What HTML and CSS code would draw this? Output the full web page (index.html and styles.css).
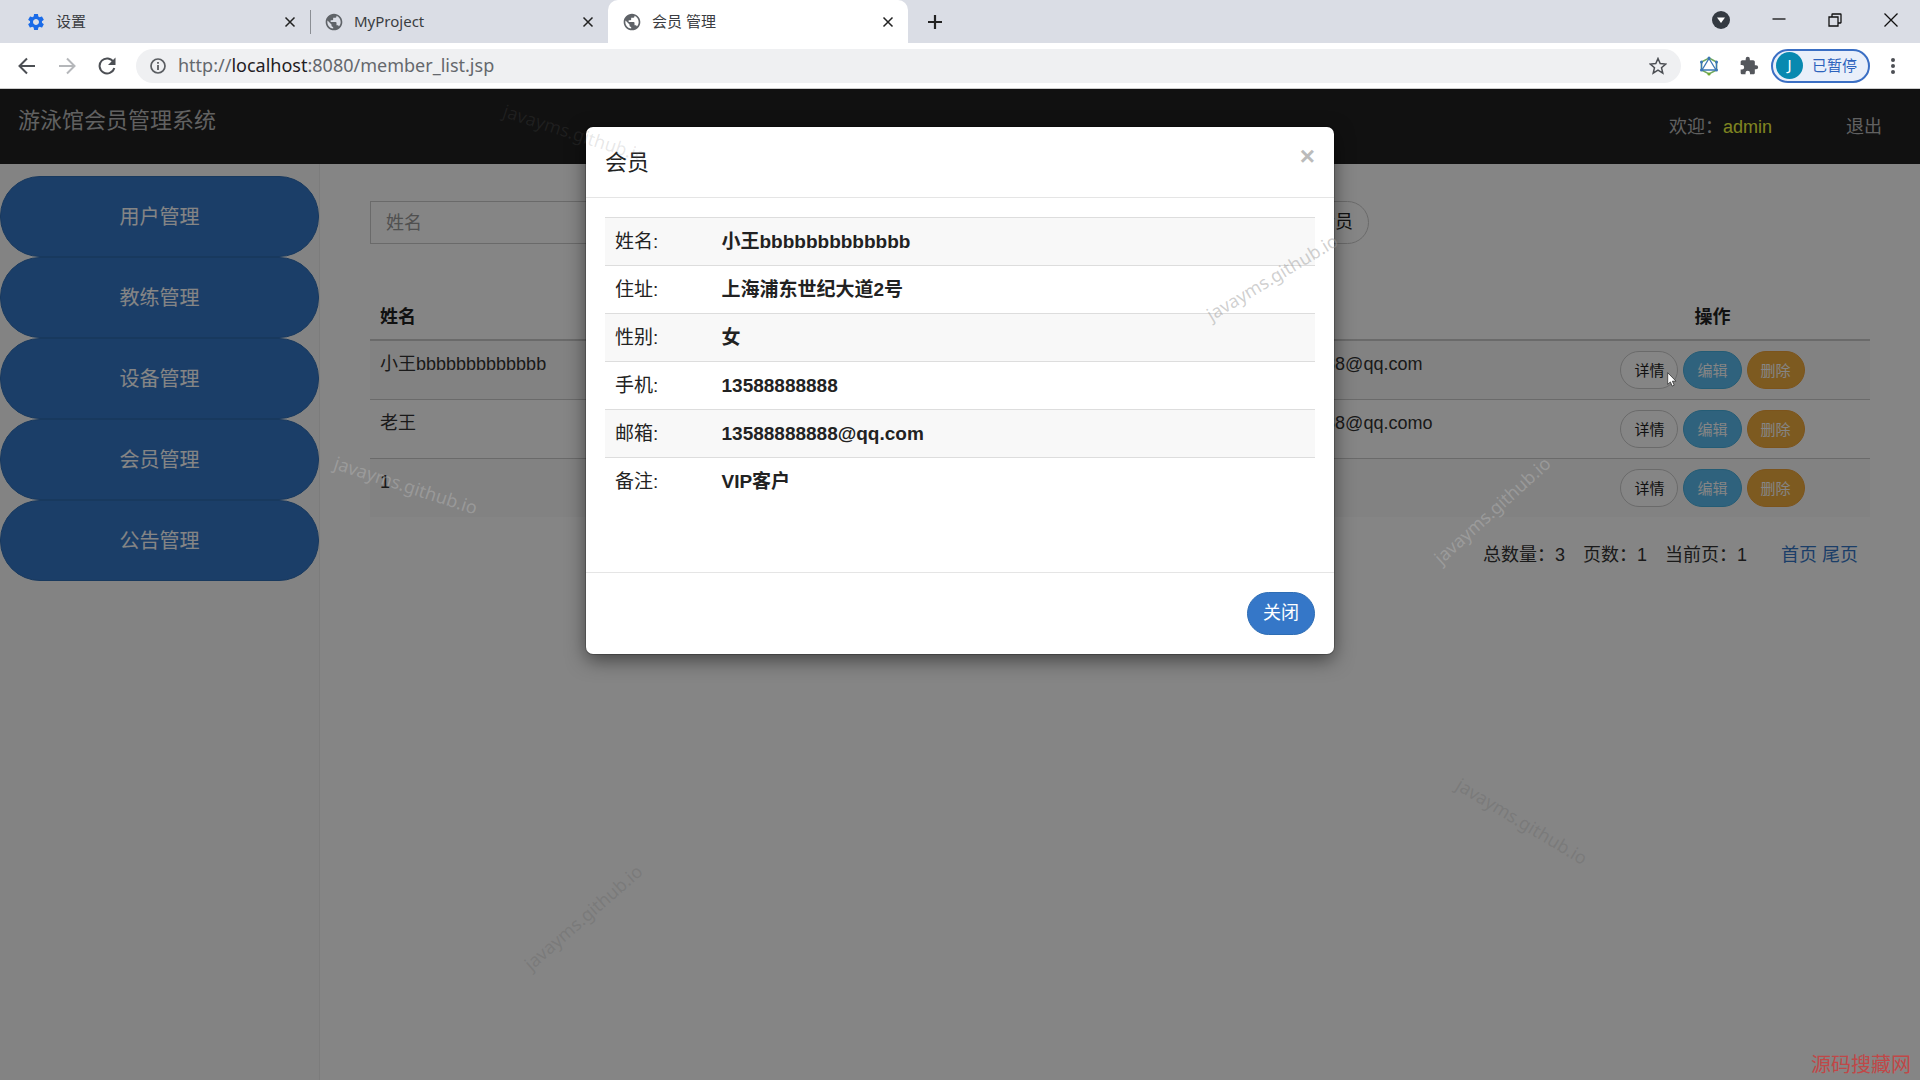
FILE: index.html
```html
<!DOCTYPE html>
<html lang="zh-CN">
<head>
<meta charset="utf-8">
<title>会员 管理</title>
<link rel="stylesheet" href="styles.css">
</head>
<body>
<svg class="defs" aria-hidden="true">
  <symbol id="x" viewBox="0 0 12 12"><path d="M1.500 1.500l9 9M10.500 1.500l-9 9" fill="none" stroke="currentColor" stroke-width="1.500"/></symbol>
  <symbol id="globe" viewBox="0 0 24 24"><path fill="currentColor" d="M12 2C6.480 2 2 6.480 2 12s4.480 10 10 10 10-4.480 10-10S17.520 2 12 2zm-1 17.930c-3.950-.490-7-3.850-7-7.930 0-.620.080-1.210.210-1.790L9 15v1c0 1.100.900 2 2 2v1.930zm6.900-2.540c-.260-.810-1-1.390-1.900-1.390h-1v-3c0-.550-.450-1-1-1H8v-2h2c.550 0 1-.450 1-1V7h2c1.100 0 2-.900 2-2v-.410c2.930 1.190 5 4.060 5 7.410 0 2.080-.800 3.970-2.100 5.390z"/></symbol>
</svg>

<header class="browser">
  <div class="tabstrip">
    <div class="tab">
      <svg class="fav fav-gear" viewBox="0 0 24 24"><path fill="currentColor" d="M19.140 12.940c.040-.300.060-.610.060-.940 0-.320-.020-.640-.070-.940l2.030-1.580c.180-.140.230-.410.120-.610l-1.920-3.320c-.120-.220-.370-.290-.590-.220l-2.390.960c-.500-.380-1.030-.700-1.620-.940L14.400 2.810c-.040-.240-.240-.410-.480-.410h-3.840c-.240 0-.430.170-.470.410L9.250 5.350c-.590.240-1.130.570-1.620.940l-2.390-.960c-.220-.080-.470 0-.590.220L2.740 8.870c-.120.210-.080.470.120.610l2.030 1.580c-.050.300-.090.630-.090.940s.020.640.070.940l-2.030 1.580c-.180.140-.230.410-.120.610l1.920 3.320c.120.220.370.290.590.220l2.390-.960c.500.380 1.030.700 1.620.940l.360 2.540c.050.240.240.410.480.410h3.840c.240 0 .440-.170.470-.410l.360-2.540c.590-.240 1.130-.560 1.620-.940l2.390.960c.220.080.470 0 .590-.220l1.920-3.320c.120-.220.070-.470-.120-.610l-2.010-1.580zM12 15.600c-1.980 0-3.600-1.620-3.600-3.600s1.620-3.600 3.600-3.600 3.600 1.620 3.600 3.600-1.620 3.600-3.600 3.600z"/></svg>
      <span class="tab-title">设置</span>
      <button class="icon-btn" aria-label="关闭标签页"><svg class="i12"><use href="#x"/></svg></button>
    </div>
    <div class="tab tab-sep">
      <svg class="fav"><use href="#globe"/></svg>
      <span class="tab-title">MyProject</span>
      <button class="icon-btn" aria-label="关闭标签页"><svg class="i12"><use href="#x"/></svg></button>
    </div>
    <div class="tab tab-active">
      <svg class="fav"><use href="#globe"/></svg>
      <span class="tab-title">会员 管理</span>
      <button class="icon-btn" aria-label="关闭标签页"><svg class="i12"><use href="#x"/></svg></button>
    </div>
    <button class="icon-btn new-tab" aria-label="新建标签页"><svg class="i16" viewBox="0 0 16 16"><path d="M8 1v14M1 8h14" stroke="currentColor" stroke-width="2.200"/></svg></button>
    <div class="window-controls">
      <button class="icon-btn" aria-label="搜索标签页"><svg class="i18" viewBox="0 0 18 18"><circle cx="9" cy="9" r="9" fill="#343a42"/><path d="M5 6.500h8L9 12z" fill="#fff"/></svg></button>
      <button class="icon-btn" aria-label="最小化"><svg class="i14" viewBox="0 0 14 14"><path d="M.500 6h13" stroke="#111" stroke-width="1.300"/></svg></button>
      <button class="icon-btn" aria-label="还原"><svg class="i14" viewBox="0 0 14 14"><path d="M1 4h9v9H1zM4 4V1.500Q4 1 4.500 1H12.500Q13 1 13 1.500V9.500Q13 10 12.500 10H10" fill="none" stroke="#111" stroke-width="1.300"/></svg></button>
      <button class="icon-btn" aria-label="关闭"><svg class="i14" viewBox="0 0 14 14"><path d="M.500.500l13 13M13.500.500l-13 13" stroke="#111" stroke-width="1.300"/></svg></button>
    </div>
  </div>
  <div class="toolbar">
    <div class="nav-buttons">
      <button class="icon-btn" aria-label="后退"><svg class="i18" viewBox="0 0 18 18"><path d="M17 9H2M9 1.500L1.500 9 9 16.500" fill="none" stroke="#4c4f54" stroke-width="2"/></svg></button>
      <button class="icon-btn" aria-label="前进"><svg class="i18" viewBox="0 0 18 18"><path d="M1 9h15M9 1.500L16.500 9 9 16.500" fill="none" stroke="#b5b7ba" stroke-width="2"/></svg></button>
      <button class="icon-btn" aria-label="刷新"><svg class="i18" viewBox="0 0 18 18"><path d="M15.500 5A7.500 7.500 0 1 0 16.300 11" fill="none" stroke="#4c4f54" stroke-width="2"/><path d="M17.500.500v7.500H10z" fill="#4c4f54"/></svg></button>
    </div>
    <div class="address">
      <svg class="i16" viewBox="0 0 16 16"><circle cx="8" cy="8" r="7" fill="none" stroke="#5a5d61" stroke-width="1.700"/><path d="M8 7v5M8 4v1.800" stroke="#5a5d61" stroke-width="1.800"/></svg>
      <span class="url">http://<span class="host">localhost</span>:8080/member_list.jsp</span>
      <button class="icon-btn" aria-label="收藏"><svg class="i18" viewBox="0 0 18 18"><path d="M9 1.500l2.200 5.100 5.500.500-4.200 3.600 1.300 5.400L9 13.200l-4.800 2.900 1.300-5.400L1.300 7.100l5.500-.500z" fill="none" stroke="#4c4f54" stroke-width="1.500"/></svg></button>
    </div>
    <button class="icon-btn" aria-label="GraphQL"><svg class="i20" viewBox="0 0 20 20"><path d="M10 2l7.500 4v8L10 18l-7.500-4V6z" fill="none" stroke="#6fa860" stroke-width="1.500"/><path d="M10 2.500L17 14H3zM2.500 6v8M17.500 6v8" fill="none" stroke="#3b77b5" stroke-width="1.300"/><g fill="#3b77b5"><circle cx="10" cy="2" r="1.500"/><circle cx="17.500" cy="6" r="1.500"/><circle cx="2.500" cy="6" r="1.500"/><circle cx="17.500" cy="14" r="1.500"/><circle cx="2.500" cy="14" r="1.500"/></g><circle cx="10" cy="18" r="1.600" fill="#6fa82f"/></svg></button>
    <button class="icon-btn" aria-label="扩展程序"><svg class="i20" viewBox="0 0 24 24"><path fill="#54575c" d="M20.500 11H19V7c0-1.100-.900-2-2-2h-4V3.500a2.500 2.500 0 0 0-5 0V5H4c-1.100 0-2 .900-2 2v3.800h1.500a2.700 2.700 0 0 1 0 5.400H2V20c0 1.100.900 2 2 2h3.800v-1.500a2.700 2.700 0 0 1 5.400 0V22H17c1.100 0 2-.900 2-2v-4h1.500a2.500 2.500 0 0 0 0-5z"/></svg></button>
    <button class="profile"><span class="avatar">J</span>已暂停</button>
    <button class="icon-btn" aria-label="菜单"><svg class="i18" viewBox="0 0 18 18"><g fill="#4c4f54"><circle cx="9" cy="3" r="2"/><circle cx="9" cy="9" r="2"/><circle cx="9" cy="15" r="2"/></g></svg></button>
  </div>
</header>

<div class="page">
  <nav class="navbar">
    <a class="brand" href="#">游泳馆会员管理系统</a>
    <span class="welcome">欢迎：<span class="user">admin</span></span>
    <a class="logout" href="#">退出</a>
  </nav>
  <div class="layout">
    <aside class="sidebar">
      <a class="side-link" href="#">用户管理</a>
      <a class="side-link" href="#">教练管理</a>
      <a class="side-link" href="#">设备管理</a>
      <a class="side-link" href="#">会员管理</a>
      <a class="side-link" href="#">公告管理</a>
    </aside>
    <main class="main">
      <form class="search">
        <input class="search-input" type="text" placeholder="姓名" aria-label="姓名">
        <button class="btn" type="button">查询</button>
        <button class="btn" type="button">添加会员</button>
      </form>
      <table class="members">
        <thead>
          <tr><th class="c-name">姓名</th><th></th><th class="c-mail">邮箱</th><th class="c-ops">操作</th></tr>
        </thead>
        <tbody>
          <tr><td>小王bbbbbbbbbbbbb</td><td></td><td>13588888888@qq.com</td><td class="ops"><div class="ops-row"><button class="btn btn-sm">详情</button><button class="btn btn-sm btn-info">编辑</button><button class="btn btn-sm btn-warning">删除</button></div></td></tr>
          <tr><td>老王</td><td></td><td>13588888888@qq.como</td><td class="ops"><div class="ops-row"><button class="btn btn-sm">详情</button><button class="btn btn-sm btn-info">编辑</button><button class="btn btn-sm btn-warning">删除</button></div></td></tr>
          <tr><td>1</td><td></td><td></td><td class="ops"><div class="ops-row"><button class="btn btn-sm">详情</button><button class="btn btn-sm btn-info">编辑</button><button class="btn btn-sm btn-warning">删除</button></div></td></tr>
        </tbody>
      </table>
      <div class="pager">
        <span>总数量：3</span><span>页数：1</span><span>当前页：1</span>
        <span class="pager-links"><a href="#">首页</a> <a href="#">尾页</a></span>
      </div>
    </main>
  </div>

  <div class="backdrop">
    <section class="modal" role="dialog" aria-labelledby="modal-title">
      <div class="modal-header">
        <h4 class="modal-title" id="modal-title">会员</h4>
        <button class="modal-close" aria-label="关闭">×</button>
      </div>
      <div class="modal-body">
        <table class="detail">
          <tr><td class="key">姓名:</td><th>小王bbbbbbbbbbbbb</th></tr>
          <tr><td class="key">住址:</td><th>上海浦东世纪大道2号</th></tr>
          <tr><td class="key">性别:</td><th>女</th></tr>
          <tr><td class="key">手机:</td><th>13588888888</th></tr>
          <tr><td class="key">邮箱:</td><th>13588888888@qq.com</th></tr>
          <tr><td class="key">备注:</td><th>VIP客户</th></tr>
        </table>
      </div>
      <div class="modal-footer"><button class="btn btn-primary">关闭</button></div>
    </section>
  </div>

  <div class="marks" aria-hidden="true">
    <span class="mark m1">javayms.github.io</span>
    <span class="mark m2">javayms.github.io</span>
    <span class="mark m3">javayms.github.io</span>
    <span class="mark m4">javayms.github.io</span>
    <span class="mark m5">javayms.github.io</span>
    <span class="mark m6">javayms.github.io</span>
    <span class="site">源码搜藏网</span>
    <svg class="cursor" viewBox="0 0 10 15"><path d="M.700.700v11.600l2.700-2.400 1.800 4.200 2-.900-1.800-4H9z" fill="#fff" stroke="#333" stroke-width=".8"/></svg>
  </div>
</div>
</body>
</html>
```
FILE: styles.css
```css
* { box-sizing: border-box; }

body {
  margin: 0;
  min-height: 100vh;
  display: flex;
  flex-direction: column;
  font: 18px/25px "Liberation Sans", "Noto Sans CJK SC", sans-serif;
  color: #333;
  background: #fff;
}

button, input { font: inherit; }
a { color: #3577c8; text-decoration: none; }
svg { display: block; flex: none; }

.defs { position: absolute; width: 0; height: 0; }
.i12 { width: 12px; height: 12px; }
.i14 { width: 14px; height: 14px; }
.i16 { width: 16px; height: 16px; }
.i18 { width: 18px; height: 18px; }
.i20 { width: 20px; height: 20px; }

/* Browser frame */
.browser { font-family: "Noto Sans", "Noto Sans CJK SC", sans-serif; }

.icon-btn {
  display: flex;
  align-items: center;
  justify-content: center;
  padding: 0;
  border: 0;
  background: none;
  color: #222;
}

.tabstrip {
  display: flex;
  height: 43px;
  padding-left: 12px;
  background: #dadde5;
}

.tab {
  display: flex;
  align-items: center;
  width: 298px;
  padding: 0 14px;
  gap: 10px;
  font-size: 15px;
  color: #3b3d42;
}

.tab-title { flex: 1; white-space: nowrap; }
.fav { width: 20px; height: 20px; color: #5f6368; }
.fav-gear { color: #1a6be8; }

.tab-sep {
  background: linear-gradient(#8b8e94, #8b8e94) 0 10px / 1px 24px no-repeat;
}

.tab-active {
  width: 300px;
  background: #fff;
  border-radius: 10px 10px 0 0;
}

.new-tab { width: 54px; }

.window-controls {
  display: flex;
  align-items: center;
  gap: 42px;
  margin-left: auto;
  padding: 0 22px 4px 0;
}

.toolbar {
  display: flex;
  align-items: center;
  gap: 20px;
  height: 46px;
  padding: 0 18px;
  border-bottom: 1px solid #ccc;
}

.nav-buttons { display: flex; gap: 22px; }

.address {
  flex: 1;
  display: flex;
  align-items: center;
  gap: 12px;
  height: 34px;
  margin-right: -2px;
  padding: 0 14px;
  border-radius: 17px;
  background: #eff0f2;
}

.url { flex: 1; font-size: 18px; color: #65686d; }
.host { color: #1f2023; }

.profile {
  display: flex;
  align-items: center;
  gap: 9px;
  height: 34px;
  margin: 0 -6px 0 -8px;
  padding: 0 11px 0 3px;
  border: 2px solid #3b6fc4;
  border-radius: 17px;
  background: #e9effa;
  color: #2d63bd;
  font-size: 15px;
}

.avatar {
  width: 27px;
  height: 27px;
  border-radius: 50%;
  background: #0889b0;
  color: #fff;
}

/* Page */
.page {
  position: relative;
  flex: 1;
  display: flex;
  flex-direction: column;
  overflow: hidden;
}

.navbar {
  display: flex;
  height: 75px;
  padding: 0 38px 0 18px;
  background: #222;
  color: #bbb;
}

.navbar a { color: inherit; }
.brand { padding-top: 19px; font-size: 22px; }
.welcome { margin-left: auto; padding-top: 26px; }
.user { color: #f4ff40; }
.navbar .logout { padding: 26px 0 0 74px; }

.layout { flex: 1; display: flex; }

.sidebar {
  width: 320px;
  padding-top: 12px;
  border-right: 1px solid #eee;
  background: #fcfcfc;
}

.side-link {
  display: block;
  height: 81px;
  border: 1px solid #2e6db4;
  border-radius: 40px;
  background: #3577c8;
  color: #fff;
  font-size: 20px;
  line-height: 81px;
  text-align: center;
}

.main { flex: 1; padding: 37px 50px; }

.search { display: flex; gap: 10px; width: 66.6%; }

.search-input {
  flex: 1;
  height: 43px;
  padding: 2px 15px 0;
  border: 1px solid #ccc;
  background: #fff;
}

.search-input::placeholder { color: #999; }

.btn {
  height: 43px;
  padding: 0 15px;
  border: 1px solid #ccc;
  border-radius: 22px;
  background: #fff;
  color: #222;
  white-space: nowrap;
}

.btn-sm {
  height: 38px;
  padding: 0 13px;
  font-size: 15px;
}

.btn-info { border-color: #46b0e0; background: #5bbcf0; color: #fff; }
.btn-warning { border-color: #eea236; background: #f0ad3e; color: #fff; }
.btn-primary { border-color: #2e6db4; background: #3577c8; color: #fff; }

table { width: 100%; border-collapse: collapse; }

.members { margin-top: 50px; table-layout: fixed; }
.members th, .members td { padding: 11px 10px 9px; text-align: left; vertical-align: top; }
.members th { border-bottom: 2px solid #ccc; color: #222; }
.members td { border-top: 1px solid #ccc; }
.members .ops { padding: 10px; }
.members tbody tr:nth-child(odd) { background: #f9f9f9; }
.members .c-name { width: 20%; }
.members .c-mail { width: 22%; }
.members .c-ops { width: 21%; text-align: center; }
.ops-row { display: flex; justify-content: center; gap: 5px; }

.pager {
  display: flex;
  justify-content: flex-end;
  gap: 18px;
  padding: 26px 12px;
}

.pager-links { padding-left: 16px; }

/* Dialog */
.backdrop {
  position: absolute;
  inset: 0;
  display: flex;
  align-items: flex-start;
  justify-content: center;
  padding-top: 38px;
  background: rgba(0, 0, 0, .48);
}

.modal {
  width: 748px;
  border-radius: 7px;
  background: #fff;
  color: #222;
  box-shadow: 0 6px 19px rgba(0, 0, 0, .5), 0 0 0 1px rgba(0, 0, 0, .2);
}

.modal-header {
  display: flex;
  justify-content: space-between;
  align-items: flex-start;
  height: 71px;
  padding: 18px 19px;
  border-bottom: 1px solid #e5e5e5;
}

.modal-title {
  margin: 0;
  font-size: 22px;
  font-weight: normal;
  line-height: 35px;
}

.modal-close {
  padding: 0;
  border: 0;
  background: none;
  color: #bbb;
  font-size: 26px;
  font-weight: bold;
  line-height: 23px;
}

.modal-body { padding: 19px 19px 66px; }
.detail { font-size: 19px; }
.detail td, .detail th {
  height: 48px;
  padding: 0 10px;
  border-top: 1px solid #ddd;
  text-align: left;
}
.detail tr:nth-child(odd) { background: #f8f8f8; }
.detail .key { width: 15%; }

.modal-footer {
  display: flex;
  justify-content: flex-end;
  padding: 19px;
  border-top: 1px solid #e5e5e5;
}

/* Overlaid marks */
.marks { position: absolute; inset: 0; pointer-events: none; }

.mark {
  position: absolute;
  transform: translate(-50%, -50%) rotate(var(--turn));
  font: 18px/24px "Noto Sans", sans-serif;
}

.m1 { left: 575px; top: 44px; --turn: 18deg; color: rgba(110, 110, 110, .16); }
.m2 { left: 406px; top: 396px; --turn: 18deg; color: rgba(190, 190, 190, .4); }
.m3 { left: 1272px; top: 188px; --turn: -31deg; color: rgba(150, 150, 150, .45); }
.m4 { left: 1492px; top: 421px; --turn: -42deg; color: rgba(190, 190, 190, .4); }
.m5 { left: 1522px; top: 732px; --turn: 31deg; color: rgba(90, 90, 90, .25); }
.m6 { left: 583px; top: 828px; --turn: -41deg; color: rgba(90, 90, 90, .25); }

.site {
  position: absolute;
  right: 9px;
  bottom: 2px;
  color: #c04848;
  font-size: 20px;
}

.cursor { position: absolute; left: 1667px; top: 283px; width: 10px; height: 15px; }
```
